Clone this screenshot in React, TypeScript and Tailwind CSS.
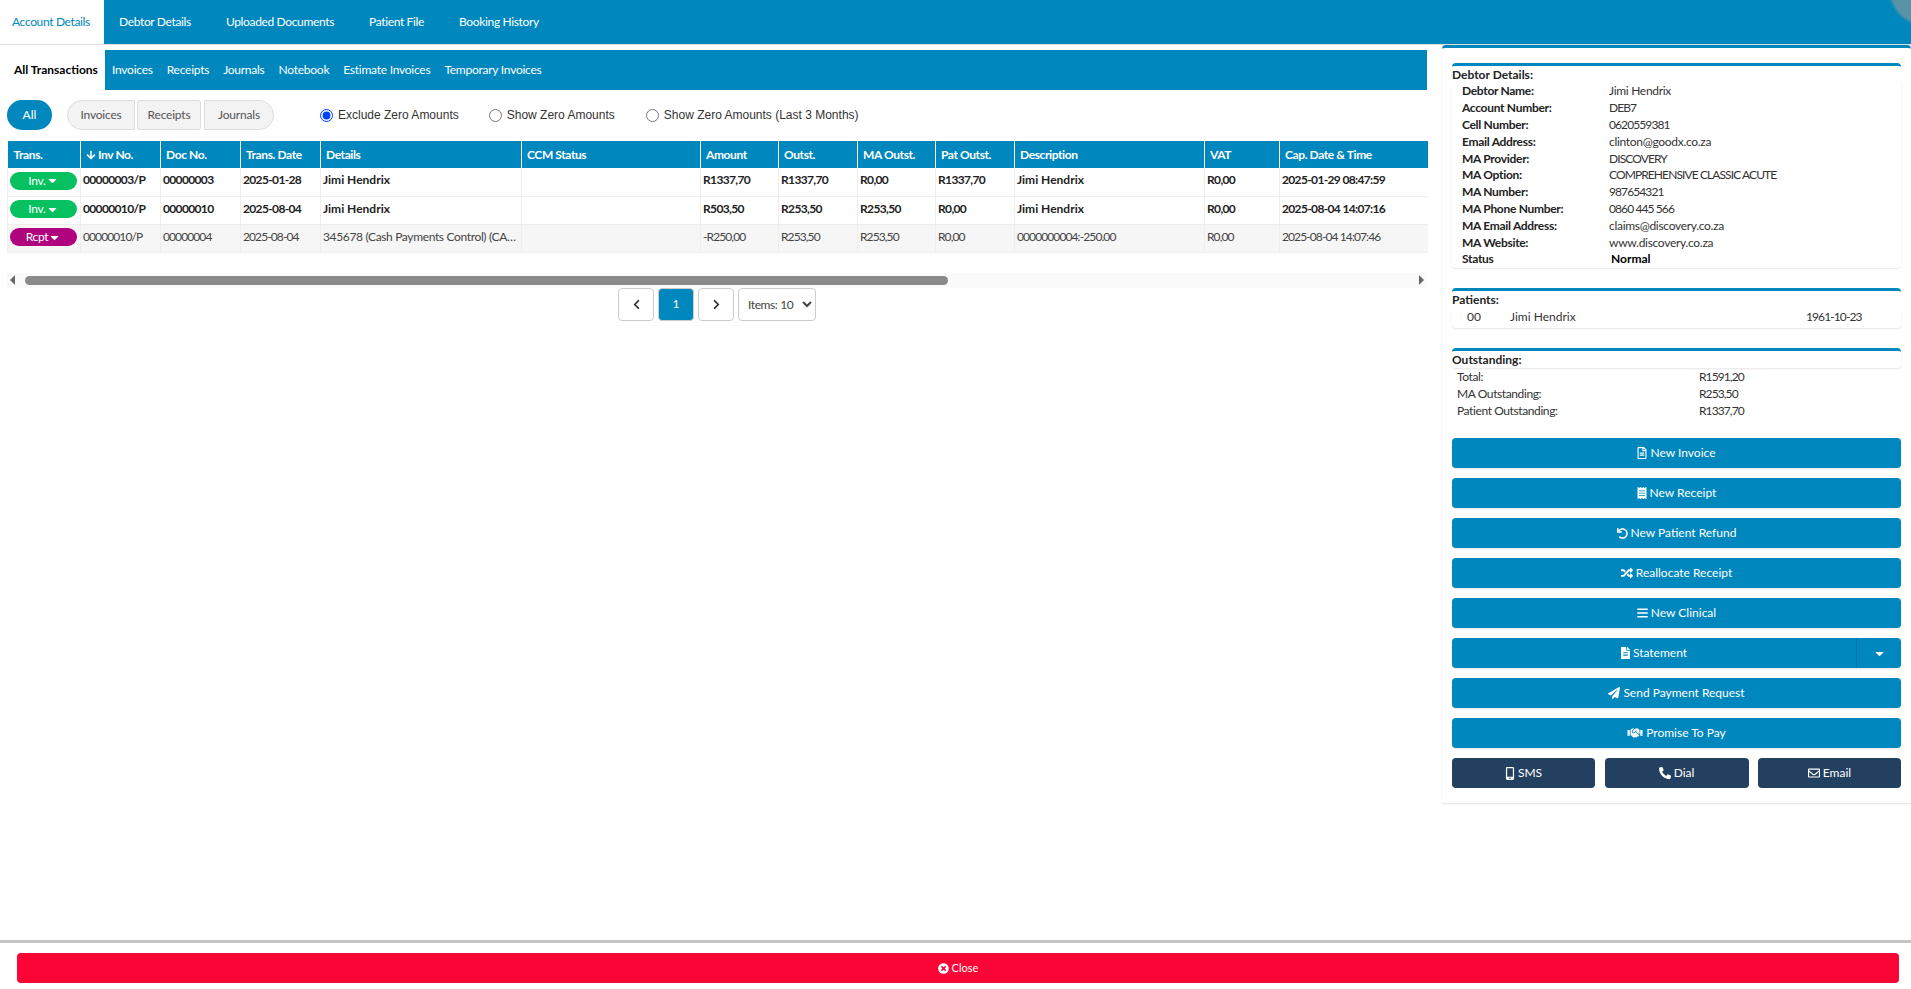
import {
  FaArrowDown,
  FaBars,
  FaCaretDown,
  FaChevronLeft,
  FaChevronRight,
  FaFileAlt,
  FaHandshake,
  FaMobileAlt,
  FaPaperPlane,
  FaPhoneAlt,
  FaRandom,
  FaReceipt,
  FaRegEnvelope,
  FaRegFileAlt,
  FaTimesCircle,
  FaUndo,
} from "react-icons/fa";
import type { ReactNode } from "react";

const mainTabs = ["Debtor Details", "Uploaded Documents", "Patient File", "Booking History"];
const subTabs = ["Invoices", "Receipts", "Journals", "Notebook", "Estimate Invoices", "Temporary Invoices"];

const columns = [
  { label: "Trans.", width: "w-[73px]" },
  { label: "Inv No.", width: "w-[80px]" },
  { label: "Doc No.", width: "w-[80px]" },
  { label: "Trans. Date", width: "w-[80px]" },
  { label: "Details", width: "w-[201px]" },
  { label: "CCM Status", width: "w-[179px]" },
  { label: "Amount", width: "w-[78px]" },
  { label: "Outst.", width: "w-[79px]" },
  { label: "MA Outst.", width: "w-[78px]" },
  { label: "Pat Outst.", width: "w-[79px]" },
  { label: "Description", width: "w-[190px]" },
  { label: "VAT", width: "w-[75px]" },
  { label: "Cap. Date & Time", width: "w-[148px]" },
];

const rows = [
  {
    type: "Inv.",
    bold: true,
    cells: ["00000003/P", "00000003", "2025-01-28", "Jimi Hendrix", "", "R1337,70", "R1337,70", "R0,00", "R1337,70", "Jimi Hendrix", "R0,00", "2025-01-29 08:47:59"],
  },
  {
    type: "Inv.",
    bold: true,
    cells: ["00000010/P", "00000010", "2025-08-04", "Jimi Hendrix", "", "R503,50", "R253,50", "R253,50", "R0,00", "Jimi Hendrix", "R0,00", "2025-08-04 14:07:16"],
  },
  {
    type: "Rcpt",
    bold: false,
    cells: ["00000010/P", "00000004", "2025-08-04", "345678 (Cash Payments Control) (CASH)", "", "-R250,00", "R253,50", "R253,50", "R0,00", "0000000004:-250.00", "R0,00", "2025-08-04 14:07:46"],
  },
];

const debtor = [
  ["Debtor Name:", "Jimi Hendrix"],
  ["Account Number:", "DEB7"],
  ["Cell Number:", "0620559381"],
  ["Email Address:", "clinton@goodx.co.za"],
  ["MA Provider:", "DISCOVERY"],
  ["MA Option:", "COMPREHENSIVE CLASSIC ACUTE"],
  ["MA Number:", "987654321"],
  ["MA Phone Number:", "0860 445 566"],
  ["MA Email Address:", "claims@discovery.co.za"],
  ["MA Website:", "www.discovery.co.za"],
];

const outstanding = [
  ["Total:", "R1591,20"],
  ["MA Outstanding:", "R253,50"],
  ["Patient Outstanding:", "R1337,70"],
];

// digits and capitals run wide in Lato compared to the original font
const isNumeric = (v: string) => /^-?R?[\d,:.\-/P ]+$/.test(v);
const isCaps = (v: string) => /^[A-Z0-9 ]+$/.test(v);

function valueTracking(v: string) {
  if (isNumeric(v) || isCaps(v)) return "tracking-[-0.9px]";
  return "tracking-[-0.3px]";
}

function cellTracking(v: string, bold: boolean) {
  if (isNumeric(v)) return bold ? "tracking-[-0.65px]" : "tracking-[-0.9px]";
  return bold ? "" : "tracking-[-0.35px]";
}

function ActionButton({ icon, label }: { icon: ReactNode; label: string }) {
  return (
    <button className="h-[30px] w-full flex items-center justify-center gap-[3px] rounded bg-[#0087bd] text-white text-[12px] shadow-sm">
      {icon}
      {label}
    </button>
  );
}

function DarkButton({ icon, label, width }: { icon: ReactNode; label: string; width: string }) {
  return (
    <button className={`${width} h-[30px] flex items-center justify-center gap-[3px] rounded bg-[#234060] text-white text-[12px]`}>
      {icon}
      {label}
    </button>
  );
}

function Radio({ label, checked, className }: { label: string; checked?: boolean; className: string }) {
  return (
    <label className={`flex items-center gap-[5px] text-[12px] text-[#333] font-['Liberation_Sans',sans-serif] ${className}`}>
      <input type="radio" name="zero" defaultChecked={checked} className="w-[13px] h-[13px] m-0 accent-[#0040ff]" />
      {label}
    </label>
  );
}

function SectionTitle({ children }: { children: ReactNode }) {
  return (
    <div className="border-t-[3px] border-[#0087bd] rounded-t-sm h-[20px] leading-[17px] font-bold text-[12px] text-[#222]">{children}</div>
  );
}

export default function App() {
  return (
    <div className="relative h-[989px] overflow-hidden flex flex-col bg-white font-['Lato',sans-serif] text-[#333]">
      {/* Main tabs */}
      <nav className="relative h-[44px] shrink-0 flex bg-[#0087bd] text-[12px] tracking-[-0.35px] overflow-hidden">
        <div className="w-[104px] pl-[12px] bg-white text-[#0087bd] flex items-center">Account Details</div>
        <div className="flex items-center gap-[35px] pl-[15px] text-white">
          {mainTabs.map((t) => (
            <span key={t}>{t}</span>
          ))}
        </div>
        <div className="absolute right-[-48px] top-[-44px] w-[69px] h-[69px] rounded-full bg-[#5a93a8] blur-[1px]" />
      </nav>
      <div className="h-px shrink-0 bg-[#ddd]" />

      <div className="flex-1 min-h-0 flex">
        {/* Left side */}
        <main className="w-[1427px] shrink-0 pt-[5px]">
          <div className="h-[40px] flex text-[12px]">
            <div className="w-[105px] pl-[14px] bg-white font-bold text-black flex items-center">All Transactions</div>
            <div className="flex-1 bg-[#0087bd] text-white tracking-[-0.25px] flex items-center gap-[14px] pl-[7px]">
              {subTabs.map((t) => (
                <span key={t}>{t}</span>
              ))}
            </div>
          </div>

          <div className="h-[30px] mt-[10px] flex items-center pl-[7px] text-[12px]">
            <button className="w-[45px] h-[30px] rounded-full bg-[#0087bd] text-white">All</button>
            <button className="ml-[15px] w-[68px] h-[30px] rounded-l-full bg-[#f3f3f3] border border-[#ddd] text-[#555] tracking-[-0.2px]">Invoices</button>
            <button className="ml-[2px] w-[64px] h-[30px] rounded-[3px] bg-[#f3f3f3] border border-[#ddd] text-[#555] tracking-[-0.2px]">Receipts</button>
            <button className="ml-[3px] w-[70px] h-[30px] rounded-r-full bg-[#f3f3f3] border border-[#ddd] text-[#555] tracking-[-0.2px]">Journals</button>
            <Radio label="Exclude Zero Amounts" checked className="ml-[46px]" />
            <Radio label="Show Zero Amounts" className="ml-[30px]" />
            <Radio label="Show Zero Amounts (Last 3 Months)" className="ml-[31px]" />
          </div>

          {/* Transactions table */}
          <div className="mt-[11px] ml-[7px]">
            <table className="w-[1420px] table-fixed border-collapse text-[12px]">
              <colgroup>
                {columns.map((c) => (
                  <col key={c.label} className={c.width} />
                ))}
              </colgroup>
              <thead>
                <tr className="h-[27px] bg-[#0087bd] text-white">
                  {columns.map((c) => (
                    <th key={c.label} className="pl-[5px] first:pl-[6px] text-left font-bold tracking-[-0.4px] border-l border-white first:border-l-0 whitespace-nowrap">
                      {c.label === "Inv No." ? (
                        <span className="flex items-center gap-[2px]">
                          <FaArrowDown className="w-[10px] h-[10px]" />
                          {c.label}
                        </span>
                      ) : (
                        c.label
                      )}
                    </th>
                  ))}
                </tr>
              </thead>
              <tbody>
                {rows.map((r, i) => (
                  <tr key={i} className={`h-[28px] border-b border-[#eee] ${r.bold ? "font-bold text-[#222]" : "bg-[#f6f6f6] text-[#444]"}`}>
                    <td className="pl-[2px] pr-[3px] pb-[2px] border-l border-[#eee]">
                      <span
                        className={`w-[67px] h-[18px] rounded-full text-white flex items-center justify-center font-normal tracking-[-0.3px] ${
                          r.type === "Inv." ? "bg-[#07c160]" : "bg-[#b0047f]"
                        }`}
                      >
                        {r.type}
                        <FaCaretDown className="w-[13px] h-[13px]" />
                      </span>
                    </td>
                    {r.cells.map((c, j) => (
                      <td key={j} className={`pl-[2px] pb-[3px] border-l border-[#eee] truncate ${cellTracking(c, r.bold)}`}>
                        {c}
                      </td>
                    ))}
                  </tr>
                ))}
              </tbody>
            </table>

            {/* Horizontal scroll bar */}
            <div className="mt-[20px] h-[15px] bg-[#fafafa] flex items-center justify-between pl-[3px] pr-[3px]">
              <span className="w-0 h-0 border-y-[5px] border-y-transparent border-r-[5px] border-r-[#666]" />
              <span className="ml-[10px] mr-auto w-[923px] h-[9px] rounded-full bg-[#8a8a8a]" />
              <span className="w-0 h-0 border-y-[5px] border-y-transparent border-l-[5px] border-l-[#666]" />
            </div>

            <div className="h-[33px] flex items-center justify-center gap-[4px] text-[12px]">
              <button className="w-[36px] h-[33px] flex items-center justify-center rounded border border-[#ccc] text-[#333]">
                <FaChevronLeft className="w-[11px] h-[11px]" />
              </button>
              <button className="w-[36px] h-[33px] rounded bg-[#0087bd] border border-[#ccc] text-white">1</button>
              <button className="w-[36px] h-[33px] flex items-center justify-center rounded border border-[#ccc] text-[#333]">
                <FaChevronRight className="w-[11px] h-[11px]" />
              </button>
              <select className="w-[78px] h-[33px] pl-[5px] pr-0 rounded border border-[#ccc] bg-white text-[#444] tracking-[-0.4px]" defaultValue="10">
                <option value="10">Items: 10</option>
              </select>
            </div>
          </div>
        </main>

        {/* Right side */}
        <aside className="ml-[15px] flex-1 h-[758px] border-t-[3px] border-[#0087bd] rounded-t shadow-[0_1px_2px_rgba(0,0,0,0.12)] px-[10px] pt-[15px] text-[12px]">
          <SectionTitle>Debtor Details:</SectionTitle>
          <div className="h-[185px] pl-[10px] rounded-b shadow-[0_1px_2px_rgba(0,0,0,0.1)]">
            {debtor.map(([k, v]) => (
              <div key={k} className="h-[16.8px] flex items-center">
                <span className="w-[147px] font-bold text-[#222] tracking-[-0.3px]">{k}</span>
                <span className={valueTracking(v)}>{v}</span>
              </div>
            ))}
            <div className="h-[16.8px] flex items-center">
              <span className="w-[149px] font-bold text-[#222] tracking-[-0.3px]">Status</span>
              <span className="font-bold text-black">Normal</span>
            </div>
          </div>

          <div className="mt-[20px]">
            <SectionTitle>Patients:</SectionTitle>
            <div className="h-[20px] pb-[2px] flex items-center rounded-b shadow-[0_1px_2px_rgba(0,0,0,0.1)]">
              <span className="ml-[15px] w-[43px]">00</span>
              <span className="w-[296px]">Jimi Hendrix</span>
              <span className={valueTracking("1961-10-23")}>1961-10-23</span>
            </div>
          </div>

          <div className="mt-[20px]">
            <div className="rounded-b shadow-[0_1px_2px_rgba(0,0,0,0.1)]">
              <SectionTitle>Outstanding:</SectionTitle>
            </div>
            {outstanding.map(([k, v]) => (
              <div key={k} className="h-[17px] flex items-center pl-[5px]">
                <span className="w-[242px] tracking-[-0.4px]">{k}</span>
                <span className={valueTracking(v)}>{v}</span>
              </div>
            ))}
          </div>

          <div className="mt-[19px] flex flex-col gap-[10px]">
            <ActionButton icon={<FaRegFileAlt className="w-[10px] h-[12px]" />} label="New Invoice" />
            <ActionButton icon={<FaReceipt className="w-[10px] h-[12px]" />} label="New Receipt" />
            <ActionButton icon={<FaUndo className="w-[11px] h-[11px]" />} label="New Patient Refund" />
            <ActionButton icon={<FaRandom className="w-[12px] h-[12px]" />} label="Reallocate Receipt" />
            <ActionButton icon={<FaBars className="w-[11px] h-[12px]" />} label="New Clinical" />
            <div className="h-[30px] w-[449px] flex rounded bg-[#0087bd] text-white shadow-sm">
              <button className="flex-1 flex items-center justify-center gap-[3px]">
                <FaFileAlt className="w-[9px] h-[12px]" />
                Statement
              </button>
              <button className="w-[45px] border-l border-[#0077a8] flex items-center justify-center">
                <FaCaretDown className="w-[13px] h-[13px]" />
              </button>
            </div>
            <ActionButton icon={<FaPaperPlane className="w-[12px] h-[12px]" />} label="Send Payment Request" />
            <ActionButton icon={<FaHandshake className="w-[16px] h-[12px]" />} label="Promise To Pay" />
            <div className="flex justify-between">
              <DarkButton width="w-[143px]" icon={<FaMobileAlt className="w-[10px] h-[13px]" />} label="SMS" />
              <DarkButton width="w-[144px]" icon={<FaPhoneAlt className="w-[12px] h-[12px]" />} label="Dial" />
              <DarkButton width="w-[143px]" icon={<FaRegEnvelope className="w-[12px] h-[12px]" />} label="Email" />
            </div>
          </div>
        </aside>
      </div>

      {/* Footer */}
      <footer className="h-[49px] shrink-0 border-t-[3px] border-[#c4c4c4] pt-[10px] px-[17px]">
        <button className="w-[1882px] h-[30px] rounded bg-[#fb0536] text-white text-[11px] flex items-center justify-center gap-[3px]">
          <FaTimesCircle className="w-[11px] h-[11px]" />
          Close
        </button>
      </footer>
    </div>
  );
}
